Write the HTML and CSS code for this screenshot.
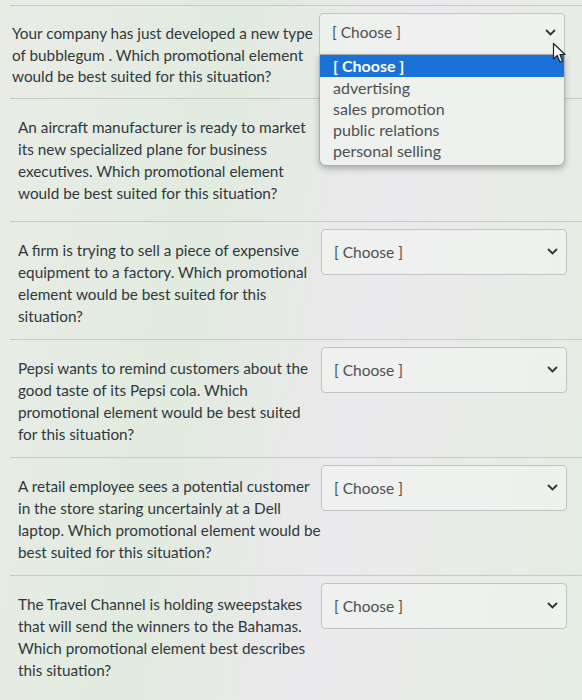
FILE: index.html
```html
<!DOCTYPE html>
<html>
<head>
<meta charset="utf-8">
<link rel="stylesheet" href="styles.css">
</head>
<body>
<div class="quiz">
  <div class="row first">
    <div class="question">Your company has just developed a new type of bubblegum . Which promotional element would be best suited for this situation?</div>
    <div class="select-wrap">
      <div class="select open">
        <span class="value">[ Choose ]</span>
        <svg class="chev" width="11" height="7" viewBox="0 0 11 7"><polyline points="1,1 5.5,5.5 10,1" fill="none" stroke="#333" stroke-width="1.8"/></svg>
      </div>
      <ul class="menu">
        <li class="active">[ Choose ]</li>
        <li>advertising</li>
        <li>sales promotion</li>
        <li>public relations</li>
        <li>personal selling</li>
      </ul>
      <svg class="cursor" width="16" height="22" viewBox="0 0 16 22"><path d="M1.5 1.5 L1.5 17 L5.2 13.4 L8 20 L10.6 18.9 L7.9 12.5 L13 12.5 Z" fill="#fafafa" stroke="#222" stroke-width="1.2" stroke-linejoin="round"/></svg>
    </div>
  </div>
  <div class="row second">
    <div class="question">An aircraft manufacturer is ready to market its new specialized plane for business executives. Which promotional element would be best suited for this situation?</div>
    <div class="select-wrap">
      <div class="select covered">
        <span class="value">[ Choose ]</span>
        <svg class="chev" width="11" height="7" viewBox="0 0 11 7"><polyline points="1,1 5.5,5.5 10,1" fill="none" stroke="#333" stroke-width="1.8"/></svg>
      </div>
    </div>
  </div>
  <div class="row">
    <div class="question">A firm is trying to sell a piece of expensive equipment to a factory. Which promotional element would be best suited for this situation?</div>
    <div class="select-wrap">
      <div class="select">
        <span class="value">[ Choose ]</span>
        <svg class="chev" width="11" height="7" viewBox="0 0 11 7"><polyline points="1,1 5.5,5.5 10,1" fill="none" stroke="#333" stroke-width="1.8"/></svg>
      </div>
    </div>
  </div>
  <div class="row">
    <div class="question">Pepsi wants to remind customers about the good taste of its Pepsi cola. Which promotional element would be best suited for this situation?</div>
    <div class="select-wrap">
      <div class="select">
        <span class="value">[ Choose ]</span>
        <svg class="chev" width="11" height="7" viewBox="0 0 11 7"><polyline points="1,1 5.5,5.5 10,1" fill="none" stroke="#333" stroke-width="1.8"/></svg>
      </div>
    </div>
  </div>
  <div class="row">
    <div class="question">A retail employee sees a potential customer in the store staring uncertainly at a Dell laptop. Which promotional element would be best suited for this situation?</div>
    <div class="select-wrap">
      <div class="select">
        <span class="value">[ Choose ]</span>
        <svg class="chev" width="11" height="7" viewBox="0 0 11 7"><polyline points="1,1 5.5,5.5 10,1" fill="none" stroke="#333" stroke-width="1.8"/></svg>
      </div>
    </div>
  </div>
  <div class="row">
    <div class="question">The Travel Channel is holding sweepstakes that will send the winners to the Bahamas. Which promotional element best describes this situation?</div>
    <div class="select-wrap">
      <div class="select">
        <span class="value">[ Choose ]</span>
        <svg class="chev" width="11" height="7" viewBox="0 0 11 7"><polyline points="1,1 5.5,5.5 10,1" fill="none" stroke="#333" stroke-width="1.8"/></svg>
      </div>
    </div>
  </div>
</div>
</body>
</html>
```
FILE: styles.css
```css
html, body {
  margin: 0;
  padding: 0;
}
body {
  width: 582px;
  height: 700px;
  overflow: hidden;
  font-family: Lato, "Open Sans", sans-serif;
  color: #30383c;
  background: linear-gradient(100deg, #e9ece6 0%, #e2ebe0 35%, #ebe9ec 60%, #e5ede2 100%);
}
.quiz {
  padding-top: 5px;
  padding-left: 10px;
}
.row {
  display: flex;
  align-items: flex-start;
  border-top: 1px solid #c6cbc6;
  padding: 7px 0 12px 8px;
}
.row.first {
  position: relative;
  z-index: 2;
  padding-left: 2px;
  padding-bottom: 10px;
}
.row.second {
  padding-bottom: 17px;
}
.question {
  flex: none;
  width: 305px;
  padding-top: 10px;
  font-size: 15.3px;
  line-height: 22px;
}
.row.first .question {
  width: 308px;
  line-height: 21.5px;
}
.select-wrap {
  position: relative;
  margin-left: -2px;
  width: 246px;
}
.row.first .select-wrap {
  margin-left: -1px;
}
.select {
  box-sizing: border-box;
  height: 46px;
  border: 1px solid #bfc4c4;
  border-radius: 4px;
  background: rgba(243, 246, 242, 0.55);
  display: flex;
  align-items: center;
  justify-content: space-between;
  padding: 0 8px 0 12px;
}
.select.open {
  height: 44px;
  padding-bottom: 6px;
}
.select.covered {
  visibility: hidden;
}
.value {
  font-size: 15.5px;
  color: #4a5054;
}
.chev {
  display: block;
}
.menu {
  position: absolute;
  z-index: 3;
  top: 41px;
  left: 0;
  right: 0;
  margin: 0;
  padding: 0 0 4px 0;
  list-style: none;
  background: #eef1ee;
  border: 1px solid #a9b0b2;
  border-radius: 2px 2px 7px 7px;
  box-shadow: 0 3px 6px rgba(0, 0, 0, 0.25);
  font-size: 16px;
  line-height: 21px;
  color: #4a5155;
}
.menu li {
  padding-left: 13px;
}
.menu li.active {
  background: #1a72d8;
  color: #ffffff;
  font-weight: bold;
  line-height: 22px;
}
.cursor {
  position: absolute;
  z-index: 4;
  top: 29px;
  right: -3px;
}
```
